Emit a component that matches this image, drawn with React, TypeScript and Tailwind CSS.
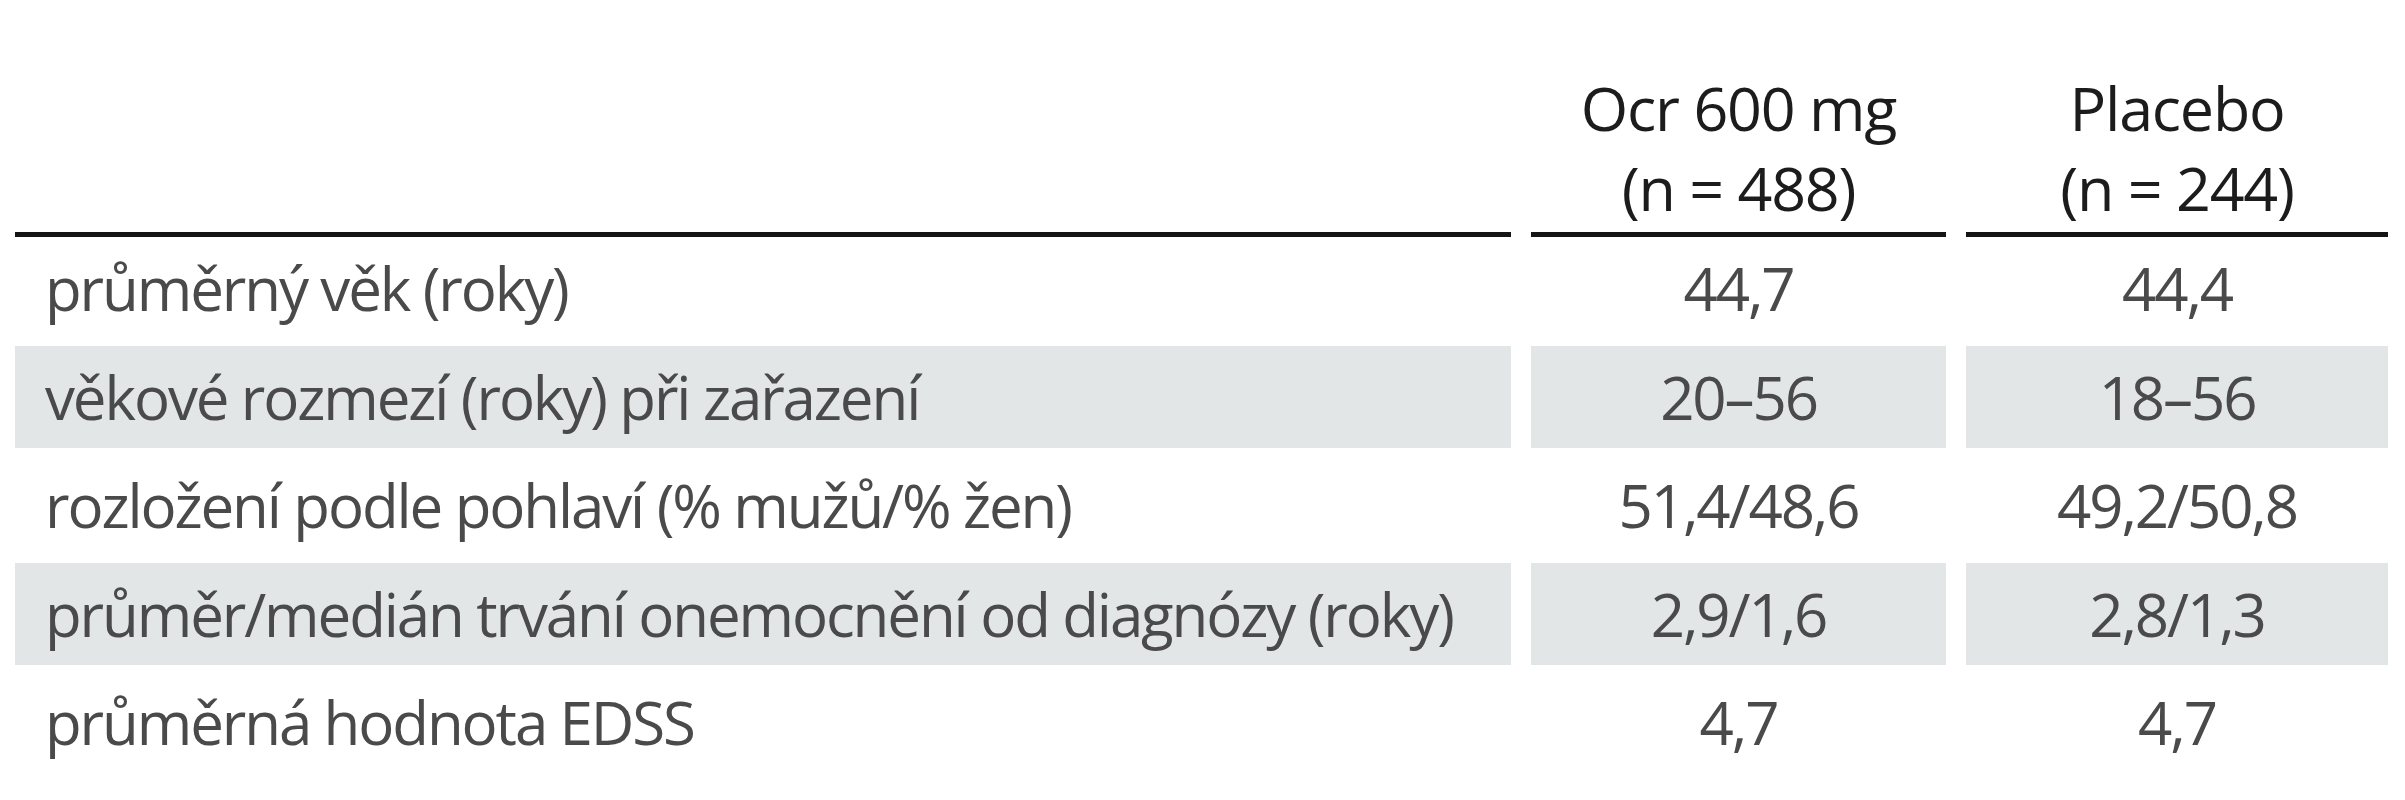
import React from "react";

type Row = { label: string; ocr: string; placebo: string; shaded: boolean };

const rows: Row[] = [
  { label: "průměrný věk (roky)", ocr: "44,7", placebo: "44,4", shaded: false },
  { label: "věkové rozmezí (roky) při zařazení", ocr: "20–56", placebo: "18–56", shaded: true },
  { label: "rozložení podle pohlaví (% mužů/% žen)", ocr: "51,4/48,6", placebo: "49,2/50,8", shaded: false },
  { label: "průměr/medián trvání onemocnění od diagnózy (roky)", ocr: "2,9/1,6", placebo: "2,8/1,3", shaded: true },
  { label: "průměrná hodnota EDSS", ocr: "4,7", placebo: "4,7", shaded: false },
];

const App: React.FC = () => {
  return (
    <div className="min-h-[800px] bg-white pl-[15px] font-['Open_Sans','Noto_Sans',sans-serif]">
      <div className="w-[2373px]">
        {/* header */}
        <div className="grid grid-cols-[1496px_415px_422px] gap-x-5 h-[237px]">
          <div className="border-b-[5px] border-[#151515]" />
          <div className="flex flex-col items-center justify-end border-b-[5px] border-[#151515] pb-[4px] text-[61px] leading-[80px] tracking-[-0.02em] text-[#1c1c1c]">
            <span>Ocr 600 mg</span>
            <span>(n = 488)</span>
          </div>
          <div className="flex flex-col items-center justify-end border-b-[5px] border-[#151515] pb-[4px] text-[61px] leading-[80px] tracking-[-0.02em] text-[#1c1c1c]">
            <span>Placebo</span>
            <span>(n = 244)</span>
          </div>
        </div>

        {/* body */}
        <div className="grid grid-cols-[1496px_415px_422px] gap-x-5 gap-y-[6.5px]">
          {rows.map((r) => (
            <React.Fragment key={r.label}>
              <div
                className={`flex h-[102px] items-center pl-[30px] text-[60px] leading-[normal] tracking-[-0.035em] text-[#4a4a4a] whitespace-nowrap ${
                  r.shaded ? "bg-[#e2e6e7]" : "bg-white"
                }`}
              >
                {r.label}
              </div>
              <div
                className={`flex h-[102px] items-center justify-center text-[60px] leading-[normal] tracking-[-0.035em] text-[#4a4a4a] ${
                  r.shaded ? "bg-[#e2e6e7]" : "bg-white"
                }`}
              >
                {r.ocr}
              </div>
              <div
                className={`flex h-[102px] items-center justify-center text-[60px] leading-[normal] tracking-[-0.035em] text-[#4a4a4a] ${
                  r.shaded ? "bg-[#e2e6e7]" : "bg-white"
                }`}
              >
                {r.placebo}
              </div>
            </React.Fragment>
          ))}
        </div>
      </div>
    </div>
  );
};

export default App;
